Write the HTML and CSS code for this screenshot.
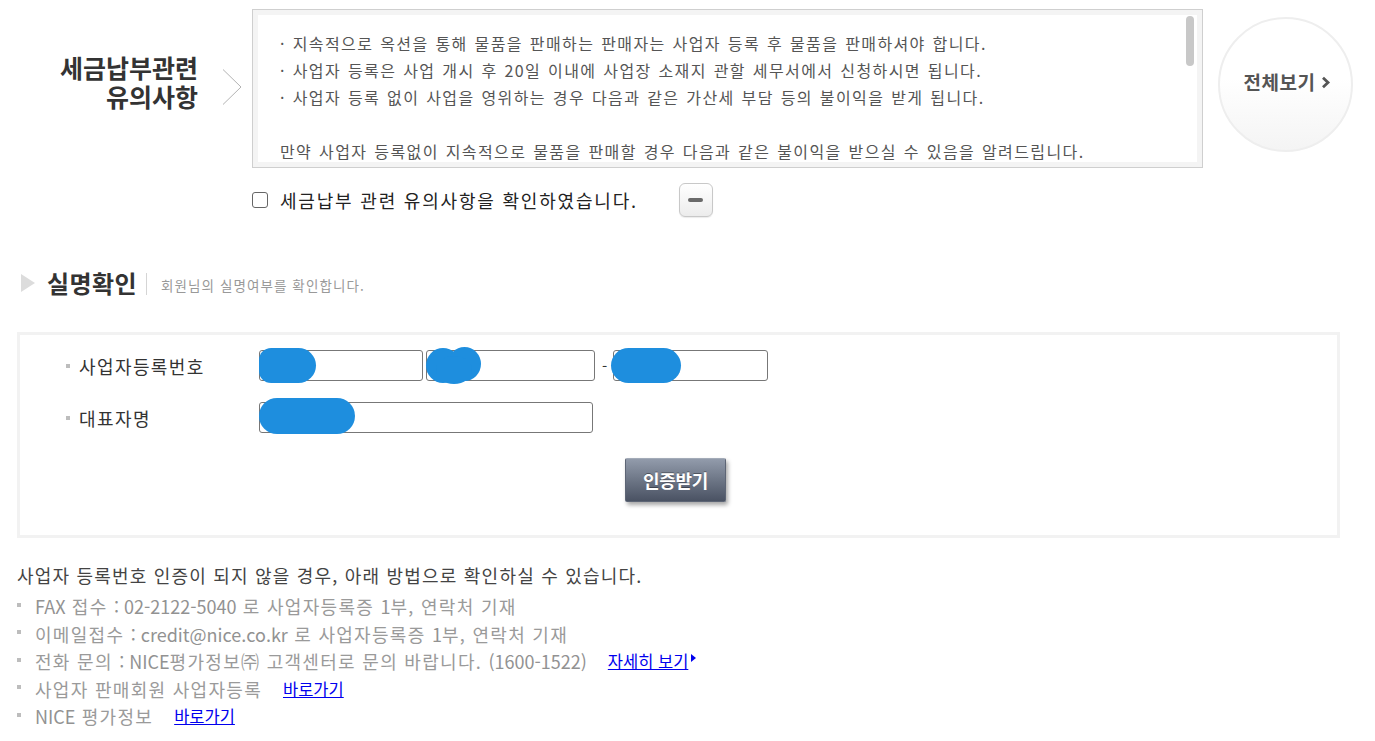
FILE: index.html
```html
<!DOCTYPE html>
<html lang="ko">
<head>
<meta charset="utf-8">
<title>세금납부관련 유의사항</title>
<link rel="stylesheet" href="styles.css">
</head>
<body>
<div class="page">
  <div class="notice-row">
    <h2 class="notice-title">세금납부관련<br>유의사항</h2>
    <svg class="chev" width="20" height="36" viewBox="0 0 20 36"><path d="M1 0.5 L19 18 L1 35.5" fill="none" stroke="#b3b3b3" stroke-width="1"/></svg>
    <div class="notice-box">
      <div class="notice-scroll">
        <p>· 지속적으로 옥션을 통해 물품을 판매하는 판매자는 사업자 등록 후 물품을 판매하셔야 합니다.</p>
        <p>· 사업자 등록은 사업 개시 후 20일 이내에 사업장 소재지 관할 세무서에서 신청하시면 됩니다.</p>
        <p>· 사업자 등록 없이 사업을 영위하는 경우 다음과 같은 가산세 부담 등의 불이익을 받게 됩니다.</p>
        <p>&nbsp;</p>
        <p>만약 사업자 등록없이 지속적으로 물품을 판매할 경우 다음과 같은 불이익을 받으실 수 있음을 알려드립니다.</p>
        <p>&nbsp;</p>
        <p>1. 미등록 가산세 : 사업 개시일부터 등록 신청일 직전일까지 공급가액의 1%</p>
        <p>2. 매입세액 불공제 : 등록 전 매입세액은 매출세액에서 공제받을 수 없습니다.</p>
        <p>3. 부가가치세 및 종합소득세 추징 : 신고하지 않은 매출에 대하여 세금이 추징됩니다.</p>
        <p>4. 신고불성실 가산세 : 무신고 납부세액의 20%</p>
      </div>
      <span class="scroll-thumb"></span>
    </div>
    <a class="circle-btn" href="#">전체보기<svg class="circle-arrow" width="10" height="13" viewBox="0 0 10 13"><path d="M2 1.8 L7 6.5 L2 11.2" fill="none" stroke="#555" stroke-width="2.8"/></svg></a>
  </div>

  <div class="check-row">
    <label class="check-label"><input type="checkbox" class="chk"><span>세금납부 관련 유의사항을 확인하였습니다.</span></label>
    <button class="minus-btn" type="button"><span class="minus-bar"></span></button>
  </div>

  <div class="section-head">
    <span class="tri"></span>
    <h3 class="section-title">실명확인</h3>
    <span class="sep"></span>
    <span class="section-sub">회원님의 실명여부를 확인합니다.</span>
  </div>

  <div class="form-box">
    <div class="form-row">
      <div class="form-label"><span class="dot"></span>사업자등록번호</div>
      <div class="field">
        <span class="inp w1"><input type="text"><span class="blob b1"></span></span>
        <span class="inp w2"><input type="text"><span class="blob b2a"></span><span class="blob b2b"></span><span class="blob b2c"></span></span>
        <span class="dash">-</span>
        <span class="inp w3"><input type="text"><span class="blob b3"></span></span>
      </div>
    </div>
    <div class="form-row row2">
      <div class="form-label"><span class="dot"></span>대표자명</div>
      <div class="field">
        <span class="inp w4"><input type="text"><span class="blob b4"></span></span>
      </div>
    </div>
    <div class="btn-row">
      <button class="auth-btn" type="button">인증받기</button>
    </div>
  </div>

  <p class="help-lead">사업자 등록번호 인증이 되지 않을 경우, 아래 방법으로 확인하실 수 있습니다.</p>
  <ul class="help-list">
    <li><span><span class="en">FAX</span> 접수 <span class="en">: 02-2122-5040</span> 로 사업자등록증 <span class="en">1</span>부, 연락처 기재</span></li>
    <li><span>이메일접수 <span class="en">: credit@nice.co.kr</span> 로 사업자등록증 <span class="en">1</span>부, 연락처 기재</span></li>
    <li><span>전화 문의 <span class="en">: NICE</span>평가정보㈜ 고객센터로 문의 바랍니다. <span class="en">(1600-1522)</span></span><a class="link" href="#">자세히 보기</a><span class="link-tri"></span></li>
    <li><span>사업자 판매회원 사업자등록</span><a class="link" href="#">바로가기</a></li>
    <li><span><span class="en">NICE</span> 평가정보</span><a class="link" href="#">바로가기</a></li>
  </ul>
</div>
</body>
</html>
```

FILE: styles.css
```css
* { box-sizing: border-box; }
html, body { margin: 0; padding: 0; background: #fff; }
body {
  font-family: "Noto Sans CJK KR", "Noto Sans", sans-serif;
  color: #333;
}
.page { width: 1375px; }

/* ---------- notice ---------- */
.notice-row {
  display: flex;
  align-items: flex-start;
  padding-top: 9px;
}
.notice-title {
  width: 198px;
  margin: 0;
  padding-top: 44px;
  text-align: right;
  font-size: 25px;
  font-weight: 700;
  line-height: 29px;
  letter-spacing: 0;
  color: #333;
}
.chev {
  margin: 60px 10px 0 24px;
  flex: none;
}
.notice-box {
  position: relative;
  width: 951px;
  height: 159px;
  border: 1px solid #cfcfcf;
  background: #f4f4f4;
  padding: 5px;
  flex: none;
}
.notice-scroll {
  height: 147px;
  background: #fff;
  overflow: hidden;
  padding: 15px 10px 0 22px;
  font-size: 16px;
  line-height: 27px;
  color: #555;
  letter-spacing: 1.4px;
  word-spacing: 1px;
}
.notice-scroll p { margin: 0; white-space: nowrap; }
.scroll-thumb {
  position: absolute;
  left: 933px;
  top: 6px;
  width: 8px;
  height: 50px;
  border-radius: 4px;
  background: #c8c8c8;
}
.circle-btn {
  margin: 8px 0 0 15px;
  width: 135px;
  height: 135px;
  border-radius: 50%;
  border: 2px solid #eeeeee;
  background: linear-gradient(#ffffff 45%, #f4f4f4);
  display: flex;
  align-items: center;
  justify-content: center;
  padding: 0 0 6px 4px;
  font-size: 19px;
  font-weight: 700;
  color: #555;
  letter-spacing: 0.5px;
  text-decoration: none;
  flex: none;
}
.circle-arrow { margin-left: 6px; margin-top: 2px; }

/* ---------- check row ---------- */
.check-row {
  display: flex;
  align-items: center;
  margin: 15px 0 0 252px;
  height: 34px;
}
.check-label {
  display: flex;
  align-items: center;
  font-size: 18px;
  color: #222;
  letter-spacing: 1.8px;
  word-spacing: 0;
  font-weight: 400;
}
.chk {
  appearance: none;
  -webkit-appearance: none;
  width: 16px;
  height: 16px;
  margin: 0 12px 0 0;
  border: 1px solid #666;
  border-radius: 3px;
  background: #fff;
}
.minus-btn {
  margin-left: 41px;
  width: 34px;
  height: 34px;
  border: 1px solid #c8c8c8;
  border-radius: 6px;
  background: linear-gradient(#ffffff, #ececec);
  box-shadow: 0 1px 1px rgba(0,0,0,0.08);
  display: flex;
  align-items: center;
  justify-content: center;
  padding: 0;
}
.minus-bar {
  width: 15px;
  height: 4px;
  border-radius: 2px;
  background: #6a6a6a;
}

/* ---------- section head ---------- */
.section-head {
  display: flex;
  align-items: center;
  margin: 51px 0 0 21px;
  height: 30px;
}
.tri {
  width: 0;
  height: 0;
  border-top: 9px solid transparent;
  border-bottom: 9px solid transparent;
  border-left: 14px solid #dcdcdc;
  margin-right: 12px;
}
.section-title {
  margin: 0;
  font-size: 24px;
  font-weight: 700;
  letter-spacing: 0.4px;
  color: #333;
  line-height: 30px;
}
.sep {
  width: 1px;
  height: 22px;
  background: #d5d5d5;
  margin: 2px 14px 0 9px;
}
.section-sub {
  font-size: 13.5px;
  color: #999;
  letter-spacing: 1.1px;
  margin-top: 3px;
}

/* ---------- form ---------- */
.form-box {
  margin: 34px 0 0 17px;
  width: 1323px;
  height: 206px;
  border: 3px solid #f2f2f2;
  padding: 15px 0 0 46px;
}
.form-row {
  display: flex;
  align-items: center;
  height: 31px;
}
.row2 { margin-top: 21px; }
.form-label {
  width: 193px;
  display: flex;
  align-items: center;
  font-size: 18px;
  color: #333;
  letter-spacing: 1.4px;
}
.dot {
  width: 4px;
  height: 4px;
  background: #bdbdbd;
  margin: 0 9px 0 0;
}
.field { display: flex; align-items: center; }
.inp { position: relative; display: block; height: 31px; }
.inp input {
  display: block;
  width: 100%;
  height: 31px;
  border: 1px solid #777;
  border-radius: 3px;
  background: #fff;
  margin: 0;
  padding: 0 6px;
  font-size: 15px;
}
.w1 { width: 164px; margin-right: 3px; }
.w2 { width: 169px; }
.w3 { width: 155px; }
.w4 { width: 334px; }
.dash { margin: 0 6px 0 7px; font-size: 15px; color: #333; }
.blob {
  position: absolute;
  background: #1e8ede;
  border-radius: 50%;
}
.b1 { left: 0; top: -2px; width: 57px; height: 35px; border-radius: 18px 26px 26px 18px; }
.b2a { left: 0; top: -2px; width: 34px; height: 35px; }
.b2b { left: 22px; top: -3px; width: 33px; height: 34px; }
.b2c { left: 10px; top: 6px; width: 36px; height: 28px; }
.b3 { left: -2px; top: -2px; width: 70px; height: 35px; border-radius: 18px; }
.b4 { left: 0; top: -4px; width: 96px; height: 36px; border-radius: 18px; }

.btn-row { margin: 25px 0 0 559px; }
.auth-btn {
  width: 101px;
  height: 44px;
  border: 1px solid #5d6575;
  border-top-color: #a3abb8;
  border-radius: 2px;
  background: linear-gradient(#929bab, #6d7686 50%, #4a5263);
  box-shadow: 2px 3px 4px rgba(0,0,0,0.35);
  color: #fff;
  font-family: "Noto Sans CJK KR", sans-serif;
  font-size: 18px;
  font-weight: 700;
  letter-spacing: -0.3px;
  text-shadow: 0 -1px 0 rgba(0,0,0,0.35);
  padding: 0;
}

/* ---------- help ---------- */
.help-lead {
  margin: 24px 0 0 17px;
  font-size: 18px;
  line-height: 27px;
  color: #444;
  letter-spacing: 1.2px;
}
.help-list {
  list-style: none;
  margin: 4px 0 0 17px;
  padding: 0;
  font-size: 18px;
  line-height: 27.5px;
  color: #9a9a9a;
  letter-spacing: 1.3px;
}
.help-list .en { letter-spacing: 0; color: #929292; }
.help-list li {
  display: flex;
  align-items: center;
  white-space: nowrap;
}
.help-list li::before {
  content: "";
  width: 4px;
  height: 4px;
  background: #bdbdbd;
  margin: -4px 14px 0 0;
  flex: none;
}
.link {
  margin-left: 21px;
  color: #0000ee;
  text-decoration: underline;
  font-size: 16.5px;
  letter-spacing: 0;
}
.link-tri {
  width: 0;
  height: 0;
  border-top: 4px solid transparent;
  border-bottom: 4px solid transparent;
  border-left: 5px solid #0000ee;
  margin: -8px 0 0 3px;
}
```
